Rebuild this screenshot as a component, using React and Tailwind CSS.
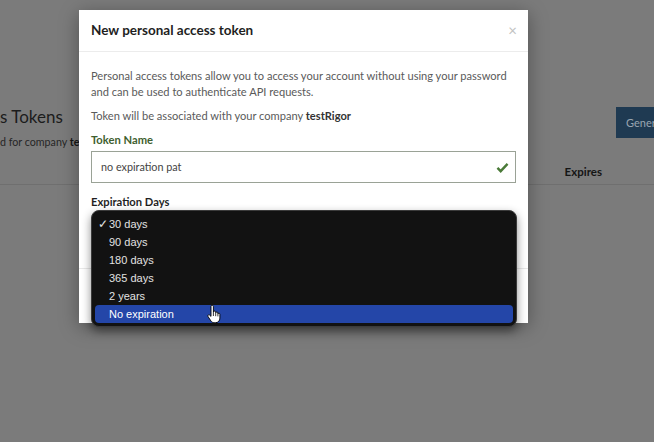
import React from "react";

function HandCursor() {
  return (
    <svg width="14" height="18" viewBox="0 0 14 18" className="absolute left-[207px] top-[305px]">
      <path
        d="M4 1.5c0-.8.6-1.3 1.2-1.3S6.4.7 6.4 1.5V7c.2-.6.7-.9 1.2-.9.6 0 1.1.4 1.1 1.1v.6c.2-.5.6-.8 1.1-.8.6 0 1.1.4 1.1 1.1v.7c.2-.4.6-.6 1-.6.6 0 1 .5 1 1.1v3.8c0 2.6-1.8 4.6-4.3 4.6H7.2c-1.4 0-2.4-.6-3.2-1.6L1 11.5c-.4-.5-.3-1.2.2-1.5.5-.4 1.1-.3 1.5.1L4 11.4V1.5z"
        fill="#fff"
        stroke="#000"
        strokeWidth="0.9"
        strokeLinejoin="round"
      />
      <path d="M6.4 7v4M8.7 7.8v3.4M10.9 8.6v2.8" stroke="#000" strokeWidth="0.8" />
    </svg>
  );
}

export default function App() {
  const options = ["30 days", "90 days", "180 days", "365 days", "2 years", "No expiration"];
  return (
    <div
      className="relative w-[654px] h-[442px] overflow-hidden bg-[#7b7b7b]"
      style={{ fontFamily: "Lato, 'Noto Sans', sans-serif" }}
    >
      {/* underlying page */}
      <div className="pt-[106px]">
        <div className="flex items-start justify-between">
          <div className="flex flex-col">
            <div className="text-[17px] leading-[22px] text-[#1c1c1c]">s Tokens</div>
            <div className="mt-[6px] text-[10.7px] leading-[16px] text-[#262626]">
              d for company <span className="font-bold text-[#141414]">testRigor</span>
            </div>
          </div>
          <div className="mt-[1px] h-[31px] w-[38px] overflow-hidden whitespace-nowrap bg-[#1f3a52] pl-[10px] text-[11px] leading-[31px] text-[#9aa5b0]">
            Gener
          </div>
        </div>
        <div className="mt-[10px] flex h-[24px] items-center justify-end pr-[52px]">
          <span className="text-[11.5px] font-bold text-[#151515]">Expires</span>
        </div>
        <div className="h-px w-full bg-[#6f6f6f]" />
      </div>

      {/* modal */}
      <div className="absolute left-[79px] top-[10px] w-[449px] h-[313px] bg-white shadow-[0_4px_18px_rgba(0,0,0,0.35)] flex flex-col">
        <div className="flex h-[42px] items-center justify-between border-b border-[#ececec] pl-[12px] pr-[11px]">
          <span className="text-[13.5px] font-bold text-[#1f1f1f]">New personal access token</span>
          <span className="text-[15px] leading-none text-[#c2c2c2]">×</span>
        </div>
        <div className="flex flex-col px-[12px] pt-[16px]">
          <p className="text-[11.1px] leading-[16px] text-[#5a5a5a]">
            Personal access tokens allow you to access your account without using your password and can be used to
            authenticate API requests.
          </p>
          <p className="mt-[8px] text-[11.1px] leading-[16px] text-[#5a5a5a]">
            Token will be associated with your company <span className="font-bold text-[#333]">testRigor</span>
          </p>
          <div className="mt-[8px] text-[11.2px] font-bold leading-[16px] text-[#3f5f30]">Token Name</div>
          <div className="mt-[3px] flex h-[32px] items-center justify-between border border-[#9aa296] pl-[9px] pr-[6px]">
            <span className="text-[10.8px] text-[#444]">no expiration pat</span>
            <svg width="13" height="11" viewBox="0 0 14 12">
              <path d="M1.5 6.5 5 10 12.5 2" fill="none" stroke="#4a7a38" strokeWidth="2.6" />
            </svg>
          </div>
          <div className="mt-[11px] text-[11.2px] font-bold leading-[16px] text-[#1f1f1f]">Expiration Days</div>
          <div className="mt-[6px] h-[32px]" />
        </div>
        <div className="mt-auto h-[55px] border-t border-[#e8e8e8]" />
      </div>

      {/* native select popup */}
      <div
        className="absolute left-[91px] top-[210px] w-[426px] rounded-[8px] border border-[#3b3b3b] bg-[#121212] px-[3px] pt-[4px] pb-[3px] shadow-[0_4px_10px_rgba(0,0,0,0.45)]"
        style={{ fontFamily: "'Liberation Sans', Arial, sans-serif" }}
      >
        {options.map((o, i) => (
          <div
            key={o}
            className={
              i === 5
                ? "relative flex h-[18px] items-center rounded-[4px] bg-[#2446a8] pl-[14px] text-[11px] text-white"
                : "relative flex h-[18px] items-center pl-[14px] text-[11px] text-[#e2e2e2]"
            }
          >
            {i === 0 && <span className="absolute left-[3px] text-[12px]">✓</span>}
            {o}
          </div>
        ))}
      </div>

      <HandCursor />
    </div>
  );
}
